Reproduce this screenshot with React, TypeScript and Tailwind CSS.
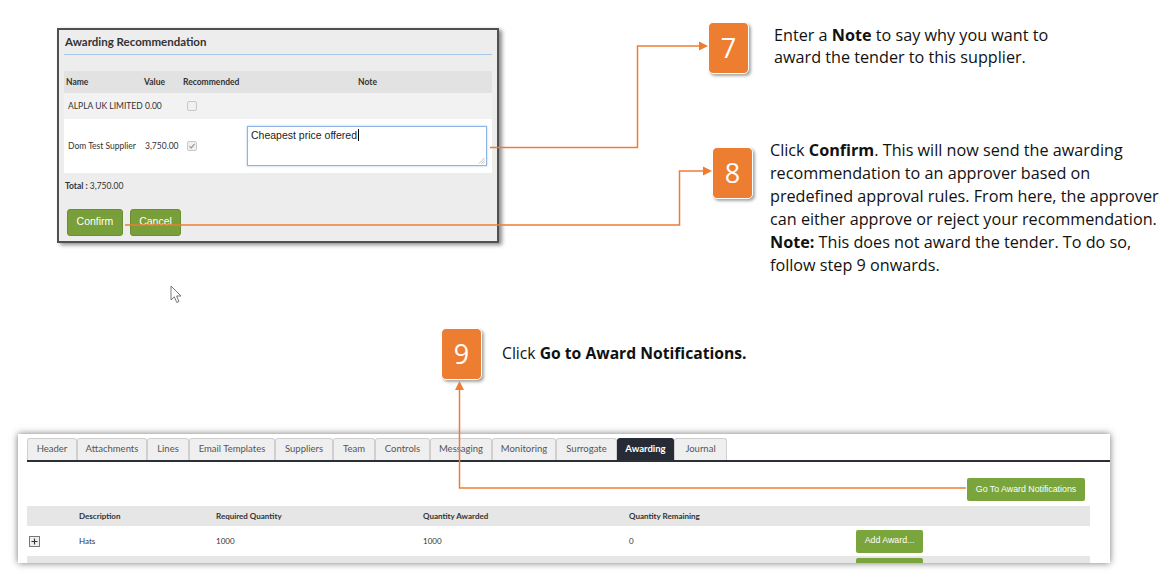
import React from 'react';

const orange = '#ed7d31';

function Badge({ n, className = '' }: { n: string; className?: string }) {
    return (
        <div className={`w-[41px] h-[52px] shrink-0 rounded-[5px] bg-[#ed7d31] border border-white shadow-[2px_2px_3px_rgba(0,0,0,0.35)] flex items-center justify-center text-white text-[27px] font-['Open_Sans'] ${className}`}>
            {n}
        </div>
    );
}

function Checkbox({ checked }: { checked?: boolean }) {
    return (
        <div className='w-[10px] h-[10px] rounded-[2px] border border-[#c8c8c8] bg-[#f1f1f1] flex items-center justify-center'>
            {checked && (
                <svg width='8' height='8' viewBox='0 0 8 8'>
                    <path d='M1.5 4.2 L3.2 6 L6.6 1.8' fill='none' stroke='#9a9a9a' strokeWidth='1.2' />
                </svg>
            )}
        </div>
    );
}

function Dialog() {
    return (
        <div className='ml-[57px] mt-[28px] w-[442px] h-[215px] bg-[#ededed] border-2 border-[#505050] shadow-[3px_2px_4px_rgba(0,0,0,0.45)] flex flex-col'>
            <div className='mx-[5px] h-[25px] border-b border-[#a9c8e8] flex items-center pl-[1px] text-[11.5px] font-bold text-[#333]'>
                Awarding Recommendation
            </div>
            <div className='mx-[5px] mt-[16px] text-[8.5px] text-[#333]'>
                <div className='h-[22px] bg-[#e2e2e2] flex items-center font-bold'>
                    <div className='w-[80px] pl-[2px]'>Name</div>
                    <div className='w-[39px]'>Value</div>
                    <div className='w-[64px]'>Recommended</div>
                    <div className='w-[241px] text-center'>Note</div>
                </div>
                <div className='h-[26px] bg-[#f2f2f2] flex items-center'>
                    <div className='w-[80px] pl-[4px]'>ALPLA UK LIMITED</div>
                    <div className='w-[39px] pl-[1px]'>0.00</div>
                    <div className='w-[64px] pl-[4px]'><Checkbox /></div>
                </div>
                <div className='h-[54px] bg-white flex items-center'>
                    <div className='w-[80px] pl-[4px]'>Dom Test Supplier</div>
                    <div className='w-[39px] pl-[1px]'>3,750.00</div>
                    <div className='w-[64px] pl-[4px]'><Checkbox checked /></div>
                    <div className='relative w-[240px] h-[40px] border border-[#8fb3e6] bg-white shadow-[0_0_2px_rgba(110,160,230,0.6)] px-[3px] pt-[1px] font-["Liberation_Sans"] text-[10.5px] text-[#222] flex items-start'>
                        <span>Cheapest price offered</span>
                        <span className='inline-block w-px h-[12px] bg-black ml-px mt-px'></span>
                        <svg className='absolute right-[1px] bottom-[1px]' width='7' height='7' viewBox='0 0 7 7'>
                            <path d='M6.5 1 L1 6.5 M6.5 3.5 L3.5 6.5 M6.5 5.5 L5.5 6.5' stroke='#aaa' strokeWidth='0.8' />
                        </svg>
                    </div>
                </div>
            </div>
            <div className='mx-[6px] mt-[7px] text-[8.5px] text-[#333]'>
                <span className='font-bold'>Total : </span>3,750.00
            </div>
            <div className='mx-[8px] mt-[16px] flex gap-[7px] font-["Liberation_Sans"] text-[10.5px] text-white'>
                <div className='w-[56px] h-[27px] rounded-[3px] bg-[#789f3a] border border-[#6a8f32] flex items-center justify-center'>Confirm</div>
                <div className='w-[51px] h-[27px] rounded-[3px] bg-[#789f3a] border border-[#6a8f32] flex items-center justify-center'>Cancel</div>
            </div>
        </div>
    );
}

const tabs = ['Header', 'Attachments', 'Lines', 'Email Templates', 'Suppliers', 'Team', 'Controls', 'Messaging', 'Monitoring', 'Surrogate', 'Awarding', 'Journal'];
const tabWidths = [50, 70, 42, 86, 58, 42, 55, 62, 64, 61, 57, 53];

function Frame() {
    return (
        <div className='ml-[18px] mt-[54px] w-[1092px] h-[129px] bg-white shadow-[0_0_7px_rgba(0,0,0,0.55)] pl-[9px] pt-[4px] font-["Lato"] text-[#444]'>
            <div className='flex h-[22px]'>
                {tabs.map((t, i) => (
                    <div
                        key={t}
                        style={{ width: tabWidths[i] }}
                        className={`h-[22px] rounded-t-[3px] flex items-center justify-center text-[9.5px] border border-b-0 ${t === 'Awarding' ? 'bg-[#262b35] border-[#262b35] text-white font-bold' : 'bg-[#efefef] border-[#cfcfcf] text-[#555]'}`}
                    >
                        {t}
                    </div>
                ))}
            </div>
            <div className='h-[2px] bg-[#2b2f38]'></div>
            <div className='h-[39px] pr-[25px] flex items-end justify-end'>
                <div className='w-[118px] h-[23px] rounded-[2px] bg-[#79a53c] text-white text-[8.8px] font-["Liberation_Sans"] flex items-center justify-center'>
                    Go To Award Notifications
                </div>
            </div>
            <div className='w-[1063px] mt-[5px] text-[8px] text-[#333]'>
                <div className='h-[20px] bg-[#e6e6e6] flex items-center font-bold'>
                    <div className='w-[52px]'></div>
                    <div className='w-[137px]'>Description</div>
                    <div className='w-[207px]'>Required Quantity</div>
                    <div className='w-[206px]'>Quantity Awarded</div>
                    <div className='w-[227px]'>Quantity Remaining</div>
                </div>
                <div className='h-[30px] flex items-center'>
                    <div className='w-[52px] pl-[2px]'>
                        <div className='w-[11px] h-[11px] border border-[#777] bg-[#eee] flex items-center justify-center'>
                            <svg width='7' height='7' viewBox='0 0 7 7'><path d='M3.5 0.5 V6.5 M0.5 3.5 H6.5' stroke='#333' strokeWidth='1.1' /></svg>
                        </div>
                    </div>
                    <div className='w-[137px]'>Hats</div>
                    <div className='w-[207px]'>1000</div>
                    <div className='w-[206px]'>1000</div>
                    <div className='w-[227px]'>0</div>
                    <div className='w-[67px] h-[23px] rounded-[2px] bg-[#79a53c] text-white text-[8.8px] font-["Liberation_Sans"] flex items-center justify-center'>Add Award...</div>
                </div>
                <div className='h-[7px] bg-[#e6e6e6] flex'>
                    <div className='ml-[829px] w-[67px] h-[5px] mt-[2px] rounded-t-[2px] bg-[#79a53c]'></div>
                </div>
            </div>
        </div>
    );
}

function Connectors() {
    return (
        <svg className='absolute inset-0 pointer-events-none' width='1169' height='579'>
            <g fill='none' stroke={orange} strokeWidth='1.5'>
                <path d='M490 147.5 H637.5 V46 H701' />
                <path d='M125 225 H679.5 V171 H705' />
                <path d='M966 488 H459.5 V388' />
            </g>
            <g fill={orange}>
                <path d='M708 46 L699 41.5 L699 50.5 Z' />
                <path d='M712 171 L703 166.5 L703 175.5 Z' />
                <path d='M459.5 381 L455 390 L464 390 Z' />
            </g>
        </svg>
    );
}

function Cursor() {
    return (
        <svg className='absolute left-[170px] top-[285px]' width='13' height='19' viewBox='0 0 13 19'>
            <path d='M1 1 L1 15 L4.3 11.8 L6.8 17.5 L9 16.5 L6.6 11 L11 11 Z' fill='white' stroke='#6b6b6b' strokeWidth='0.9' strokeLinejoin='round' />
        </svg>
    );
}

export default function App() {
    return (
        <div className='relative w-[1169px] h-[579px] bg-white overflow-hidden font-["Lato"] text-[#111]'>
            <div className='flex h-[318px]'>
                <Dialog />
                <div className='ml-[209px] mt-[22px] flex flex-col font-["Open_Sans"]'>
                    <div className='flex'>
                        <Badge n='7' />
                        <div className='ml-[25px] mt-[2px] text-[16.2px] leading-[22px] whitespace-nowrap'>
                            Enter a <b>Note</b> to say why you want to<br />
                            award the tender to this supplier.
                        </div>
                    </div>
                    <div className='flex mt-[65px] ml-[4px]'>
                        <Badge n='8' className='mt-[8px]' />
                        <div className='ml-[17px] text-[16.2px] leading-[23px] whitespace-nowrap'>
                            Click <b>Confirm</b>. This will now send the awarding<br />
                            recommendation to an approver based on<br />
                            predefined approval rules. From here, the approver<br />
                            can either approve or reject your recommendation.<br />
                            <b>Note:</b> This does not award the tender. To do so,<br />
                            follow step 9 onwards.
                        </div>
                    </div>
                </div>
            </div>
            <div className='flex items-center ml-[441px] mt-[10px]'>
                <Badge n='9' />
                <div className='ml-[20px] text-[15.7px] whitespace-nowrap font-["Open_Sans"]'>
                    Click <b>Go to Award Notifications.</b>
                </div>
            </div>
            <Frame />
            <Connectors />
            <Cursor />
        </div>
    );
}
